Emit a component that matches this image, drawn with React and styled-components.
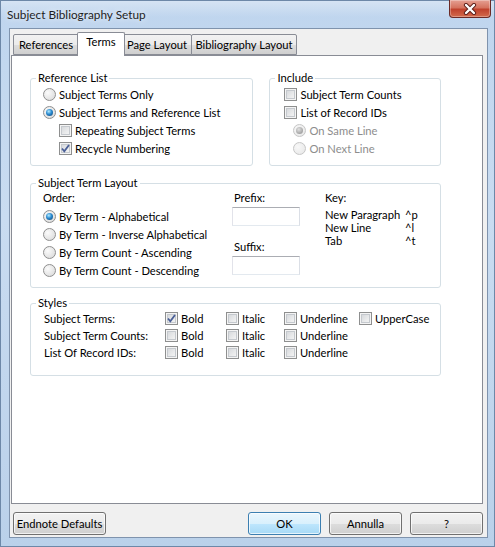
import styled, { createGlobalStyle } from 'styled-components';

const GlobalStyle = createGlobalStyle`
  body {
    margin: 0;
    background: #b9d1ea;
  }
`;

const FONT = `'Lato', 'Liberation Sans', sans-serif`;
const SIZE = '11.2px';

function CheckMark() {
  return (
    <svg width="11" height="11" viewBox="0 0 11 11">
      <path d="M2 5.5 L4.3 8.3 L9 2" fill="none" stroke="#4a5f97" strokeWidth="1.8" />
    </svg>
  );
}

function Checkbox({ checked, label }) {
  return (
    <Option>
      <Box>{checked && <CheckMark />}</Box>
      <span>{label}</span>
    </Option>
  );
}

function Radio({ checked, disabled, label }) {
  return (
    <Option $disabled={disabled}>
      <Round $disabled={disabled}>{checked && <Dot $disabled={disabled} />}</Round>
      <span>{label}</span>
    </Option>
  );
}

function CloseIcon() {
  return (
    <svg width="14" height="12" viewBox="0 0 14 12">
      <path d="M3 2 L11 10 M11 2 L3 10" stroke="#5a1c18" strokeWidth="4.2" strokeLinecap="round" />
      <path d="M3 2 L11 10 M11 2 L3 10" stroke="#ffffff" strokeWidth="2.4" strokeLinecap="round" />
    </svg>
  );
}

const tabs = [
  { label: 'References', width: 66 },
  { label: 'Terms', width: 48, active: true },
  { label: 'Page Layout', width: 70 },
  { label: 'Bibliography Layout', width: 106 },
];

const orders = [
  'By Term - Alphabetical',
  'By Term - Inverse Alphabetical',
  'By Term Count - Ascending',
  'By Term Count - Descending',
];

const styleRows = [
  { label: 'Subject Terms:', bold: true, upper: true },
  { label: 'Subject Term Counts:' },
  { label: 'List Of Record IDs:' },
];

export default function App() {
  return (
    <Window>
      <GlobalStyle />
      <TitleBar>
        <Title>Subject Bibliography Setup</Title>
        <CloseButton>
          <CloseIcon />
        </CloseButton>
      </TitleBar>

      <Client>
        <TabRow>
          {tabs.map((t) => (
            <Tab key={t.label} $active={t.active} $width={t.width}>
              {t.label}
            </Tab>
          ))}
        </TabRow>

        <Panel>
          <TopRow>
            <Group $width={224}>
              <Legend>Reference List</Legend>
              <Radio label="Subject Terms Only" />
              <Radio checked label="Subject Terms and Reference List" />
              <Indent>
                <Checkbox label="Repeating Subject Terms" />
                <Checkbox checked label="Recycle Numbering" />
              </Indent>
            </Group>
            <Group $width={172} $pad={14}>
              <Legend $pad={14}>Include</Legend>
              <Checkbox label="Subject Term Counts" />
              <Checkbox label="List of Record IDs" />
              <Indent $by={9}>
                <Radio checked disabled label="On Same Line" />
                <Radio disabled label="On Next Line" />
              </Indent>
            </Group>
          </TopRow>

          <Group $gap={9}>
            <Legend>Subject Term Layout</Legend>
            <LayoutGrid>
              <div>
                <Label>Order:</Label>
                {orders.map((o, i) => (
                  <Radio key={o} checked={i === 0} label={o} />
                ))}
              </div>
              <AffixColumn>
                <Label>Prefix:</Label>
                <TextBox />
                <Label $top={12}>Suffix:</Label>
                <TextBox />
              </AffixColumn>
              <div>
                <Label>Key:</Label>
                <KeyTable>
                  <span>New Paragraph</span>
                  <span>^p</span>
                  <span>New Line</span>
                  <span>^l</span>
                  <span>Tab</span>
                  <span>^t</span>
                </KeyTable>
              </div>
            </LayoutGrid>
          </Group>

          <Group $gap={7} $bottom={14}>
            <Legend>Styles</Legend>
            <StylesGrid>
              {styleRows.map((r) => (
                <StyleRow key={r.label}>
                  <span>{r.label}</span>
                  <Checkbox checked={r.bold} label="Bold" />
                  <Checkbox label="Italic" />
                  <Checkbox label="Underline" />
                  {r.upper ? <Checkbox label="UpperCase" /> : <span />}
                </StyleRow>
              ))}
            </StylesGrid>
          </Group>
        </Panel>

        <Footer>
          <Button $wide>Endnote Defaults</Button>
          <Spacer />
          <Button $primary>OK</Button>
          <Button>Annulla</Button>
          <Button>?</Button>
        </Footer>
      </Client>
    </Window>
  );
}

const Window = styled.div`
  width: 495px;
  height: 547px;
  box-sizing: border-box;
  font-family: ${FONT};
  font-size: ${SIZE};
  color: #000;
  white-space: nowrap;
  background: linear-gradient(180deg, #bfd5ee 0%, #c9dcf1 40%, #bad1ea 100%);
  border: 1px solid #6d88a8;
  display: flex;
  flex-direction: column;
`;

const TitleBar = styled.div`
  height: 27px;
  display: flex;
  align-items: flex-start;
  padding-left: 6px;
  background: linear-gradient(180deg, rgba(255, 255, 255, 0.35), rgba(255, 255, 255, 0) 60%);
`;

const Title = styled.span`
  margin-top: 6px;
  font-size: 11.8px;
  color: #1e1e1e;
  text-shadow: 0 0 6px #fff;
`;

const CloseButton = styled.div`
  margin-left: auto;
  margin-right: 3px;
  margin-top: -1px;
  width: 42px;
  height: 18px;
  box-sizing: border-box;
  border: 1px solid #6b2a26;
  border-top: none;
  border-radius: 0 0 4px 4px;
  background: linear-gradient(180deg, #e5a093 0%, #d5735f 45%, #c0422d 55%, #d26a4c 100%);
  box-shadow: inset 0 0 0 1px rgba(255, 255, 255, 0.3);
  display: flex;
  align-items: center;
  justify-content: center;
`;

const Client = styled.div`
  margin: 0 6px 0 8px;
  height: 510px;
  box-sizing: border-box;
  border: 1px solid #7f93ad;
  background: #f0f0f0;
  padding: 3px 4px 0 1px;
  display: flex;
  flex-direction: column;
`;

const TabRow = styled.div`
  display: flex;
  align-items: flex-end;
  height: 23px;
  padding-left: 2px;
  position: relative;
  z-index: 1;
`;

const Tab = styled.div`
  box-sizing: border-box;
  width: ${(p) => p.$width}px;
  text-align: center;
  height: ${(p) => (p.$active ? '24px' : '21px')};
  margin: ${(p) => (p.$active ? '0 -2px -1px' : '0 0 0 -1px')};
  padding-top: ${(p) => (p.$active ? '2px' : '3px')};
  border: 1px solid #898c95;
  border-bottom: ${(p) => (p.$active ? 'none' : '1px solid #898c95')};
  border-radius: 2px 2px 0 0;
  background: ${(p) =>
    p.$active ? '#ffffff' : 'linear-gradient(180deg, #f2f2f2 0%, #ebebeb 50%, #dddddd 51%, #cfcfcf 100%)'};
  position: relative;
  z-index: ${(p) => (p.$active ? 2 : 1)};

  &:first-child {
    margin-left: 0;
  }
`;

const Panel = styled.div`
  height: 449px;
  box-sizing: border-box;
  border: 1px solid #898c95;
  background: #ffffff;
  padding: 14px 41px 0 18px;
  display: flex;
  flex-direction: column;
`;

const TopRow = styled.div`
  display: flex;
  gap: 16px;
`;

const Group = styled.fieldset`
  margin: ${(p) => p.$gap || 0}px 0 0;
  padding: 0 0 ${(p) => p.$bottom || 8}px ${(p) => p.$pad || 12}px;
  min-width: 0;
  width: ${(p) => (p.$width ? `${p.$width}px` : 'auto')};
  box-sizing: border-box;
  border: 1px solid #d5dfe5;
  border-radius: 3px;
  display: flex;
  flex-direction: column;
`;

const Legend = styled.legend`
  padding: 0 2px;
  margin-left: ${(p) => 5 - (p.$pad || 12)}px;
  line-height: 16px;
  margin-bottom: -1px;
`;

const Option = styled.label`
  display: flex;
  align-items: center;
  gap: 3px;
  height: 18px;
  color: ${(p) => (p.$disabled ? '#8d8d8d' : '#000')};
`;

const Box = styled.span`
  flex: none;
  width: 13px;
  height: 13px;
  box-sizing: border-box;
  border: 1px solid #8e8f8f;
  background: linear-gradient(135deg, #cfd2d6 0%, #eaebec 60%, #f8f8f8 100%);
  box-shadow: inset 0 0 0 1px #f4f4f4, inset 0 0 0 2px #c5c9ce;
  display: flex;
  align-items: center;
  justify-content: center;
`;

const Round = styled.span`
  flex: none;
  width: 13px;
  height: 13px;
  box-sizing: border-box;
  border-radius: 50%;
  border: 1px solid ${(p) => (p.$disabled ? '#c6c6c6' : '#8f8f8f')};
  background: ${(p) =>
    p.$disabled
      ? 'radial-gradient(circle at 35% 35%, #f8f8f8, #e6e6e6)'
      : 'radial-gradient(circle at 35% 35%, #fbfbfb, #d6d6d6)'};
  display: flex;
  align-items: center;
  justify-content: center;
`;

const Dot = styled.span`
  width: 7px;
  height: 7px;
  border-radius: 50%;
  background: ${(p) =>
    p.$disabled
      ? 'radial-gradient(circle at 40% 35%, #e0e0e0, #a3a3a3 70%)'
      : 'radial-gradient(circle at 40% 35%, #b4ecff, #2b8ad0 45%, #0d3d6a 100%)'};
`;

const Indent = styled.div`
  padding-left: ${(p) => p.$by || 16}px;
`;

const LayoutGrid = styled.div`
  display: grid;
  grid-template-columns: 189px 93px auto;
  margin-top: -1px;
`;

const Label = styled.div`
  height: 18px;
  line-height: 18px;
  margin-top: ${(p) => p.$top || 0}px;
`;

const AffixColumn = styled.div`
  display: flex;
  flex-direction: column;

  & > ${Label} {
    padding-left: 2px;
  }
`;

const TextBox = styled.div`
  width: 68px;
  height: 19px;
  box-sizing: border-box;
  border: 1px solid #abadb3;
  border-left-color: #e2e3ea;
  border-right-color: #dbdfe6;
  border-bottom-color: #e3e9ef;
  background: #fff;
`;

const KeyTable = styled.div`
  display: grid;
  grid-template-columns: 80px auto;
  line-height: 13px;
  margin-top: 1px;
`;

const StylesGrid = styled.div`
  display: flex;
  flex-direction: column;
  padding-left: 1px;
`;

const StyleRow = styled.div`
  display: grid;
  grid-template-columns: 121px 61px 58px 75px auto;
  align-items: center;
  height: 17px;

  & > ${Option} {
    height: 17px;
  }
`;

const Footer = styled.div`
  display: flex;
  gap: 8px;
  margin-top: 8px;
  padding-left: 2px;
`;

const Spacer = styled.div`
  flex: 1;
`;

const Button = styled.button`
  font-family: ${FONT};
  font-size: ${SIZE};
  color: #000;
  white-space: nowrap;
  height: 23px;
  width: ${(p) => (p.$wide ? '93px' : '73px')};
  padding: 0;
  border: 1px solid ${(p) => (p.$primary ? '#3c7fb1' : '#707070')};
  border-radius: 3px;
  background: ${(p) =>
    p.$primary
      ? 'linear-gradient(180deg, #eaf6fd 0%, #d9f0fc 50%, #bee6fd 51%, #a7d9f5 100%)'
      : 'linear-gradient(180deg, #f2f2f2 0%, #ebebeb 50%, #dddddd 51%, #cfcfcf 100%)'};
  box-shadow: inset 0 0 0 1px rgba(255, 255, 255, 0.7);
`;
